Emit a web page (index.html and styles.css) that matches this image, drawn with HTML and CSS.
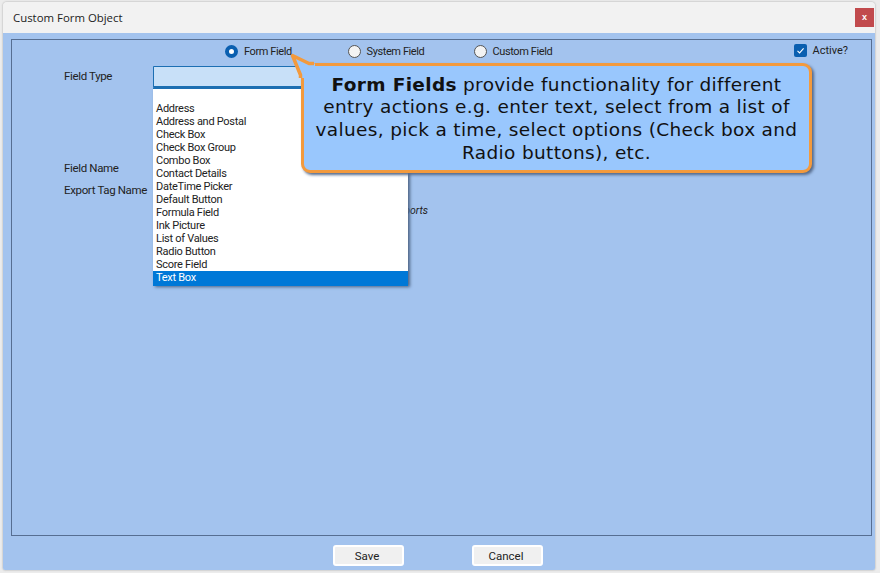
FILE: index.html
```html
<!DOCTYPE html>
<html lang="en">
<head>
<meta charset="utf-8">
<title>Custom Form Object</title>
<link rel="stylesheet" href="styles.css">
</head>
<body>
<div class="window">
  <header class="titlebar">
    <span class="title">Custom Form Object</span>
    <button class="close" type="button">x</button>
  </header>
  <main class="panel">
    <section class="fieldbox">
      <div class="options">
        <label class="radio-option first"><span class="radio checked"></span>Form Field</label>
        <label class="radio-option second"><span class="radio"></span>System Field</label>
        <label class="radio-option"><span class="radio"></span>Custom Field</label>
        <label class="active">
          <span class="checkbox"><svg viewBox="0 0 13 13" width="13" height="13"><path d="M3.5 6.8 5.6 8.9 9.6 4.4" fill="none" stroke="#fff" stroke-width="1.1"/></svg></span>Active?
        </label>
      </div>
      <div class="form">
        <div class="row row-type"><span class="label">Field Type</span><div class="combo"></div></div>
        <div class="row row-name"><span class="label">Field Name</span></div>
        <div class="row row-tag"><span class="label">Export Tag Name</span></div>
        <div class="hint">Tag used in exports and reports</div>
      </div>
    </section>
    <footer class="actions">
      <button class="btn" type="button">Save</button>
      <button class="btn" type="button">Cancel</button>
    </footer>
  </main>
  <ul class="list">
    <li>&nbsp;</li>
    <li>Address</li>
    <li>Address and Postal</li>
    <li>Check Box</li>
    <li>Check Box Group</li>
    <li>Combo Box</li>
    <li>Contact Details</li>
    <li>DateTime Picker</li>
    <li>Default Button</li>
    <li>Formula Field</li>
    <li>Ink Picture</li>
    <li>List of Values</li>
    <li>Radio Button</li>
    <li>Score Field</li>
    <li class="selected">Text Box</li>
  </ul>
  <aside class="callout">
    <p><strong>Form Fields</strong> provide functionality for different entry actions e.g. enter text, select from a list of values, pick a time, select options (Check box and Radio buttons), etc.</p>
  </aside>
  <svg class="tail" viewBox="0 0 30 30" width="30" height="30"><path d="M10.5 25 V22 L2.5 2.5 L19 10.5 H25 V25 Z" fill="#99c7fd"/><path d="M10.5 25 V22 L2.5 2.5 L19 10.5 H24" fill="none" stroke="#f39a3d" stroke-width="3.5" stroke-linejoin="round"/></svg>
</div>
</body>
</html>
```
FILE: styles.css
```css
* { box-sizing: border-box; }
html, body { margin: 0; height: 573px; overflow: hidden; }
body { background: #ececec; font-family: Roboto, "Liberation Sans", sans-serif; font-size: 11px; color: #222; }
.window { position: relative; width: 872px; height: 568px; margin: 2px 0 0 3px; display: flex; flex-direction: column; border-radius: 4px 4px 2px 2px; overflow: hidden; box-shadow: 0 0 2px #9a9a9a; }
.titlebar { height: 31px; flex: none; background: #f2f2f2; display: flex; align-items: center; justify-content: space-between; padding: 0 1px 0 10px; }
.title { font-family: "Open Sans", sans-serif; font-size: 11.4px; color: #222; }
.close { width: 19px; height: 19px; border: 0; padding: 0 0 2px; background: #c14a4d; color: #fff; font: bold 9px "Liberation Sans", sans-serif; }
.panel { flex: 1; display: flex; flex-direction: column; background: #a3c3ee; }
.fieldbox { flex: 1; margin: 6px 3px 0 8px; border: 1px solid #566e92; }
.options { display: flex; align-items: center; height: 21px; margin-top: 1px; padding: 0 23px 0 213px; }
.radio-option { display: flex; align-items: center; gap: 6px; width: 126px; letter-spacing: -.4px; }
.radio-option.first { width: 122.5px; }
.radio { width: 13px; height: 13px; border-radius: 50%; border: 1px solid #555; background: #f3f3f3; flex: none; }
.radio.checked { border: 4px solid #0a5fb0; background: #fff; }
.active { margin-left: auto; display: flex; align-items: center; gap: 6px; position: relative; top: -1px; }
.checkbox { width: 13px; height: 13px; border-radius: 2px; background: #0a5fb0; display: block; }
.checkbox svg { display: block; }
.form { padding: 4px 0 0 52px; }
.row { display: flex; align-items: flex-start; }
.label { width: 89px; flex: none; line-height: 14px; font-size: 11.5px; letter-spacing: -.35px; }
.row-type { height: 95px; }
.row-type .label { padding-top: 3px; }
.row-name { height: 22px; }
.combo { width: 255px; height: 22px; background: #c8e0f8; border: 1px solid #1c6fb3; border-bottom-width: 2px; border-radius: 1px; }
.hint { margin: 7px 0 0 199px; width: 165px; text-align: right; font-style: italic; font-size: 10.5px; line-height: 13px; }
.actions { height: 34px; flex: none; display: flex; justify-content: flex-start; gap: 68px; padding: 9px 0 0 330px; }
.btn { width: 71px; height: 21px; padding: 0 3px 0 0; background: #f0f0f0; border: 2px solid #fff; border-radius: 3px; font: 11.5px Roboto, sans-serif; color: #222; }
.list { position: absolute; left: 150px; top: 86px; width: 255px; height: 197px; margin: 0; padding: 0; list-style: none; background: #fff; border-top: 1px solid #1c6fb3; box-shadow: 2px 2px 3px #4d6485; letter-spacing: -.28px; }
.list li { height: 13px; line-height: 13px; padding-left: 3px; }
.list .selected { height: 15px; line-height: 14px; background: #0078d7; color: #fff; }
.callout { position: absolute; left: 298px; top: 61px; width: 511px; height: 110px; border: 3.5px solid #f39a3d; border-radius: 9px; background: #99c7fd; box-shadow: 2px 2px 3px #54698a; display: flex; align-items: center; }
.callout p { margin: 0; width: 100%; padding: 2px 11px 0; text-align: center; font-family: "DejaVu Sans", sans-serif; font-size: 18.5px; letter-spacing: .33px; line-height: 22.7px; color: #111; }
.callout strong { font-weight: 700; }
.tail { position: absolute; left: 287px; top: 51px; }
```
